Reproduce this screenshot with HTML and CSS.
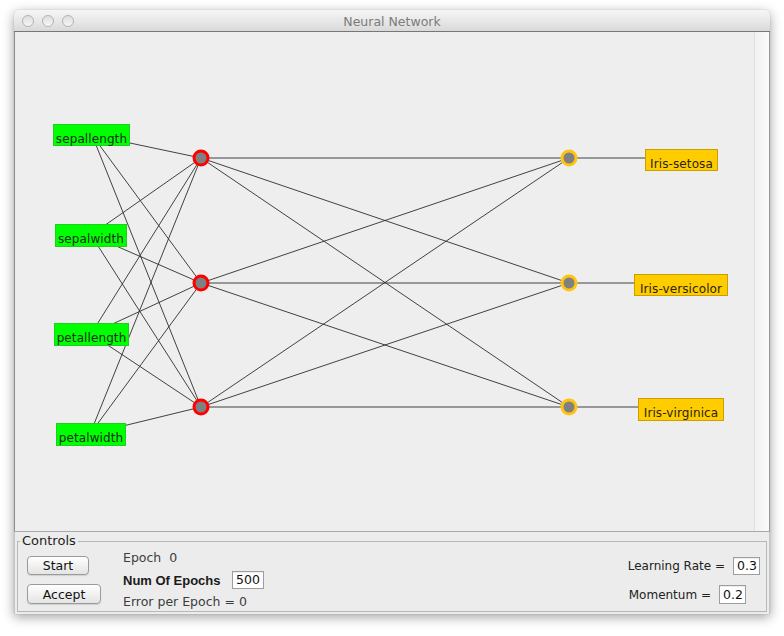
FILE: index.html
```html
<!DOCTYPE html>
<html>
<head>
<meta charset="utf-8">
<title>Neural Network</title>
<link rel="stylesheet" href="styles.css">
</head>
<body>
<div class="window">
  <div class="titlebar">
    <div class="lights"><span class="light"></span><span class="light"></span><span class="light"></span></div>
    <div class="title">Neural Network</div>
  </div>
  <div class="main">
    <div class="canvas">
      <svg class="net" width="739" height="499" viewBox="15 33 739 499" xmlns="http://www.w3.org/2000/svg">
        <g class="links">
          <line x1="92" y1="136" x2="201" y2="159"/>
          <line x1="92" y1="136" x2="201" y2="284"/>
          <line x1="92" y1="136" x2="201" y2="408"/>
          <line x1="91" y1="236" x2="201" y2="159"/>
          <line x1="91" y1="236" x2="201" y2="284"/>
          <line x1="91" y1="236" x2="201" y2="408"/>
          <line x1="91" y1="335" x2="201" y2="159"/>
          <line x1="91" y1="335" x2="201" y2="284"/>
          <line x1="91" y1="335" x2="201" y2="408"/>
          <line x1="90" y1="435" x2="201" y2="159"/>
          <line x1="90" y1="435" x2="201" y2="284"/>
          <line x1="90" y1="435" x2="201" y2="408"/>
          <line x1="201" y1="159" x2="569" y2="159"/>
          <line x1="201" y1="159" x2="569" y2="284"/>
          <line x1="201" y1="159" x2="569" y2="408"/>
          <line x1="201" y1="284" x2="569" y2="159"/>
          <line x1="201" y1="284" x2="569" y2="284"/>
          <line x1="201" y1="284" x2="569" y2="408"/>
          <line x1="201" y1="408" x2="569" y2="159"/>
          <line x1="201" y1="408" x2="569" y2="284"/>
          <line x1="201" y1="408" x2="569" y2="408"/>
          <line x1="569" y1="159" x2="681" y2="159"/>
          <line x1="569" y1="284" x2="681" y2="284"/>
          <line x1="569" y1="408" x2="681" y2="408"/>
        </g>
        <g class="inputs">
          <rect x="53.5" y="125.5" width="76" height="21"/>
          <text x="91.5" y="143.5">sepallength</text>
          <rect x="55.5" y="225.5" width="71" height="22"/>
          <text x="91" y="243.5">sepalwidth</text>
          <rect x="54.5" y="324.5" width="74" height="22"/>
          <text x="91.5" y="342.5">petallength</text>
          <rect x="56.5" y="424.5" width="69" height="22"/>
          <text x="91" y="442.5">petalwidth</text>
        </g>
        <g class="outputs">
          <rect x="645.5" y="150.5" width="72" height="21"/>
          <text x="681.5" y="168.5">Iris-setosa</text>
          <rect x="634.5" y="275.5" width="93" height="21"/>
          <text x="681" y="293.5">Iris-versicolor</text>
          <rect x="638.5" y="399.5" width="85" height="22"/>
          <text x="681" y="417.5">Iris-virginica</text>
        </g>
        <g class="hidden">
          <circle cx="201" cy="159" r="7"/>
          <circle cx="201" cy="284" r="7"/>
          <circle cx="201" cy="408" r="7"/>
        </g>
        <g class="outnodes">
          <circle cx="569" cy="159" r="7"/>
          <circle cx="569" cy="284" r="7"/>
          <circle cx="569" cy="408" r="7"/>
        </g>
      </svg>
    </div>
    <div class="strip"></div>
  </div>
  <div class="controls">
    <fieldset class="group">
      <legend>Controls</legend>
      <div class="buttons">
        <button class="btn btn-start">Start</button>
        <button class="btn btn-accept">Accept</button>
      </div>
      <div class="status">
        <div class="line">Epoch&nbsp; 0</div>
        <div class="row"><span class="bold">Num Of Epochs</span><span class="field f-epochs">500</span></div>
        <div class="line line-err">Error per Epoch = 0</div>
      </div>
      <div class="params">
        <div class="prow"><span class="plabel">Learning Rate =</span><span class="field f-rate">0.3</span></div>
        <div class="prow prow2"><span class="plabel">Momentum =</span><span class="field f-mom">0.2</span></div>
      </div>
    </fieldset>
  </div>
</div>
</body>
</html>
```
FILE: styles.css
```css
html, body {
  margin: 0;
  padding: 0;
  background: #ffffff;
}
body {
  width: 784px;
  height: 636px;
  overflow: hidden;
  font-family: "DejaVu Sans", "Liberation Sans", sans-serif;
}
.window {
  margin: 10px 0 0 14px;
  width: 756px;
  border-radius: 5px 5px 0 0;
  box-shadow: 0 3px 12px rgba(0, 0, 0, 0.38), 0 0 1px rgba(0, 0, 0, 0.3);
  background: #ededed;
}
.titlebar {
  height: 21px;
  border-bottom: 1px solid #777777;
  border-radius: 5px 5px 0 0;
  background: linear-gradient(to bottom, #f6f6f6, #e8e8e8 50%, #d9d9d9);
  display: flex;
  align-items: center;
  position: relative;
}
.lights {
  display: flex;
  gap: 8px;
  padding-left: 8px;
}
.light {
  width: 10px;
  height: 10px;
  border-radius: 50%;
  border: 1px solid #b3b3b3;
  background: linear-gradient(to bottom, #dedede, #f6f6f6);
  box-sizing: content-box;
}
.title {
  position: absolute;
  left: 0;
  right: 0;
  top: 4px;
  text-align: center;
  font-size: 12.5px;
  color: #7b7b7b;
}
.main {
  display: flex;
  height: 499px;
  border-bottom: 1px solid #a9a9a9;
}
.canvas {
  width: 739px;
  background: #eeeeee;
  border-left: 1px solid #8b8b8b;
}
.net {
  display: block;
}
.links line {
  stroke: #2e2e2e;
  stroke-width: 0.9;
}
.inputs rect {
  fill: #00ff00;
  stroke: #1fcf1f;
  stroke-width: 1;
}
.outputs rect {
  fill: #ffcc00;
  stroke: #caa000;
  stroke-width: 1;
}
.inputs text, .outputs text {
  font-family: "DejaVu Sans", sans-serif;
  font-size: 12px;
  fill: #1c2a1c;
  text-anchor: middle;
  letter-spacing: 0.1px;
}
.outputs text {
  fill: #2a2410;
}
.hidden circle {
  fill: #808080;
  stroke: #ff0000;
  stroke-width: 3;
}
.outnodes circle {
  fill: #808080;
  stroke: #ffc412;
  stroke-width: 3;
}
.strip {
  width: 14px;
  border-left: 1px solid #e0e0e0;
  border-right: 1px solid #999999;
  background: linear-gradient(to right, #f1f1f1, #fbfbfb);
}
.controls {
  height: 82px;
  padding: 2px 2px 0 2px;
  background: #ececec;
  border-left: 1px solid #c4c4c4;
  border-right: 1px solid #c4c4c4;
  box-sizing: border-box;
}
.group {
  margin: 0;
  padding: 1px 6px 2px 9px;
  border: 1px solid #b7b7b7;
  display: flex;
  align-items: flex-start;
  height: 78px;
  box-sizing: border-box;
}
.group legend {
  padding: 0 2px;
  margin-left: -7px;
  font-size: 13px;
  line-height: 14px;
  color: #1e1e1e;
}
.buttons {
  display: flex;
  flex-direction: column;
  align-items: flex-start;
  gap: 9px;
  padding-top: 7px;
  width: 96px;
}
.btn {
  font-family: "DejaVu Sans", sans-serif;
  font-size: 12.5px;
  color: #111;
  padding: 0;
  border: 1px solid #9b9b9b;
  border-radius: 4px;
  background: linear-gradient(to bottom, #ffffff, #f1f1f1 50%, #e4e4e4);
  box-shadow: 0 1px 1px rgba(0, 0, 0, 0.12);
}
.btn-start {
  width: 62px;
  height: 19px;
}
.btn-accept {
  width: 74px;
  height: 20px;
}
.status {
  display: flex;
  flex-direction: column;
  font-size: 12.5px;
  color: #3c3c3c;
  padding-top: 1px;
}
.line {
  height: 15px;
  line-height: 15px;
}
.row {
  margin-top: 6px;
  display: flex;
  align-items: center;
  height: 18px;
}
.line-err {
  margin-top: 5px;
}
.bold {
  font-family: "Liberation Sans", sans-serif;
  font-weight: bold;
  font-size: 13px;
  color: #1a1a1a;
  width: 109px;
}
.field {
  display: inline-block;
  box-sizing: border-box;
  background: #ffffff;
  border: 1px solid #9e9e9e;
  box-shadow: inset 0 1px 1px rgba(0, 0, 0, 0.08);
  font-size: 12.5px;
  color: #111;
  padding-left: 3px;
}
.f-epochs {
  width: 32px;
  height: 18px;
  line-height: 16px;
}
.params {
  margin-left: auto;
  display: flex;
  flex-direction: column;
  align-items: flex-end;
  padding-top: 8px;
}
.prow {
  display: flex;
  align-items: center;
}
.prow2 {
  margin-top: 10px;
}
.plabel {
  font-size: 12px;
  color: #222;
  margin-right: 8px;
}
.f-rate {
  width: 27px;
  height: 18px;
  line-height: 16px;
}
.f-mom {
  width: 27px;
  height: 19px;
  line-height: 17px;
  margin-right: 14px;
}
```
